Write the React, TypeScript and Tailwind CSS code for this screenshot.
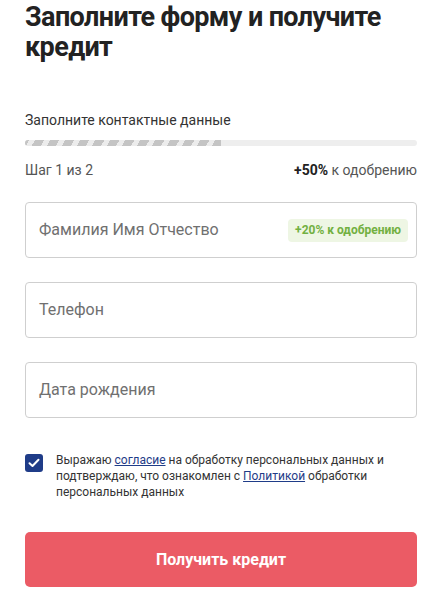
import { useState } from 'react';

function Field({ label, badge }: { label: string; badge?: string }) {
  return (
    <div className="flex h-[56px] items-center justify-between rounded-[4px] border border-[#cfcfcf] bg-white pl-[13px] pr-[8px]">
      <span className="text-[16px] text-[#707070]">{label}</span>
      {badge && (
        <span className="rounded-[4px] bg-[#eef6e4] px-[7px] py-[4px] text-[12px] font-bold leading-[15px] text-[#72b041]">
          {badge}
        </span>
      )}
    </div>
  );
}

export default function App() {
  const [agree, setAgree] = useState(true);

  return (
    <div className="min-h-[595px] bg-white pl-[25px] pr-[11px] pt-[2px] font-['Roboto',sans-serif] text-[#222]">
      <h1 className="text-[27px] font-bold leading-[30px] tracking-[-0.6px] text-[#222]">
        Заполните форму и получите кредит
      </h1>

      <div className="mt-[50px] text-[14px] leading-[16px] text-[#333]">Заполните контактные данные</div>

      <div className="mt-[12px] h-[6px] w-full overflow-hidden rounded-full bg-[#eeeeee]">
        <div className="h-full w-1/2 bg-[repeating-linear-gradient(-60deg,#c4c4c4_0px,#c4c4c4_8px,#ececec_8px,#ececec_13px)]" />
      </div>

      <div className="mt-[16px] flex items-center justify-between text-[14px] leading-[16px]">
        <span className="text-[#555]">Шаг 1 из 2</span>
        <span className="text-[#555]">
          <b className="text-[#222]">+50%</b> к одобрению
        </span>
      </div>

      <div className="mt-[24px] flex flex-col gap-[24px]">
        <Field label="Фамилия Имя Отчество" badge="+20% к одобрению" />
        <Field label="Телефон" />
        <Field label="Дата рождения" />
      </div>

      <div className="mt-[34px] flex items-start gap-[13px]">
        <button
          onClick={() => setAgree(!agree)}
          className={`mt-[2px] flex h-[18px] w-[18px] shrink-0 items-center justify-center rounded-[3px] ${agree ? 'bg-[#1f3c88]' : 'border border-[#999] bg-white'}`}
        >
          {agree && (
            <svg width="12" height="10" viewBox="0 0 12 10" fill="none">
              <path d="M1.5 5.2 4.5 8 10.5 1.8" stroke="white" strokeWidth="2" strokeLinecap="round" strokeLinejoin="round" />
            </svg>
          )}
        </button>
        <p className="text-[12px] leading-[16px] text-[#333]">
          Выражаю <a className="text-[#1f3c88] underline" href="#">согласие</a> на обработку персональных данных и
          подтверждаю, что ознакомлен с <a className="text-[#1f3c88] underline" href="#">Политикой</a> обработки
          персональных данных
        </p>
      </div>

      <button className="mt-[32px] flex h-[55px] w-full items-center justify-center rounded-[5px] bg-[#eb5b65] text-[16px] font-bold text-white">
        Получить кредит
      </button>
    </div>
  );
}
